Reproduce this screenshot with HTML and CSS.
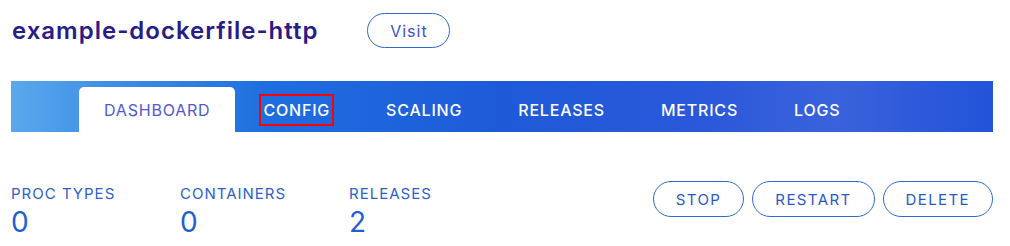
FILE: index.html
```html
<!DOCTYPE html>
<html>
<head>
    <meta charset="utf-8">
    <title>example-dockerfile-http</title>
    <link rel="stylesheet" href="styles.css">
</head>
<body>
    <div class="page">
        <div class="app-header">
            <h1 class="app-name">example-dockerfile-http</h1>
            <a class="pill visit" href="#">Visit</a>
        </div>

        <div class="tab-bar">
            <a class="tab active" href="#">DASHBOARD</a>
            <a class="tab" href="#"><span class="marked">CONFIG</span></a>
            <a class="tab" href="#">SCALING</a>
            <a class="tab" href="#">RELEASES</a>
            <a class="tab" href="#">METRICS</a>
            <a class="tab" href="#">LOGS</a>
        </div>

        <div class="summary">
            <div class="stat">
                <div class="stat-label">PROC TYPES</div>
                <div class="stat-value">0</div>
            </div>
            <div class="stat">
                <div class="stat-label">CONTAINERS</div>
                <div class="stat-value">0</div>
            </div>
            <div class="stat">
                <div class="stat-label">RELEASES</div>
                <div class="stat-value">2</div>
            </div>
            <div class="actions">
                <button class="pill action">STOP</button>
                <button class="pill action">RESTART</button>
                <button class="pill action">DELETE</button>
            </div>
        </div>
    </div>
</body>
</html>
```

FILE: styles.css
```css
* {
    box-sizing: border-box;
    font-family: Inter, "Noto Sans", sans-serif;
}
body {
    margin: 0;
    background: #fff;
}
.page {
    padding: 13px 17px 0 11px;
}
.app-header {
    display: flex;
    align-items: center;
    gap: 49px;
    height: 35px;
    padding-left: 1px;
}
.app-name {
    margin: 0;
    font-size: 24px;
    font-weight: 600;
    letter-spacing: 1px;
    color: #2a1c86;
}
.pill {
    display: inline-flex;
    align-items: center;
    justify-content: center;
    border: 1px solid #2f6ad0;
    border-radius: 18px;
    background: #fff;
    text-decoration: none;
}
.visit {
    width: 83px;
    height: 35px;
    font-size: 16px;
    color: #3d52c4;
    letter-spacing: 1px;
}
.tab-bar {
    display: flex;
    align-items: flex-end;
    height: 51px;
    margin-top: 33px;
    padding-left: 68px;
    background: linear-gradient(to right, #5aa9ec 0%, #3f8ee6 10%, #1e6ee0 26%, #1e5ad8 50%, #2a58da 70%, #3a62dc 84%, #2253d9 100%);
}
.tab {
    display: flex;
    align-items: center;
    justify-content: center;
    height: 45px;
    padding: 0 28px;
    font-size: 16px;
    font-weight: 500;
    letter-spacing: 0.8px;
    color: #fff;
    text-decoration: none;
}
.tab.active {
    padding: 0 25px;
    background: #fff;
    color: #5357d2;
    font-weight: 400;
    border-radius: 5px 5px 0 0;
}
.marked {
    padding: 4px 2px;
    margin: 0 -2px;
    outline: 2px solid #f00;
}
.summary {
    display: flex;
    align-items: flex-start;
    margin-top: 49px;
}
.stat {
    width: 169px;
}
.stat-label {
    margin-top: 3px;
    font-size: 15px;
    letter-spacing: 1px;
    color: #2d62c9;
}
.stat-value {
    margin-top: 3px;
    font-size: 28px;
    line-height: 32px;
    color: #1f5fcf;
}
.actions {
    display: flex;
    gap: 8px;
    margin-left: auto;
}
.action {
    height: 36px;
    padding: 0 22px;
    font-size: 15px;
    letter-spacing: 1.4px;
    color: #2a58c8;
    cursor: pointer;
}
```
